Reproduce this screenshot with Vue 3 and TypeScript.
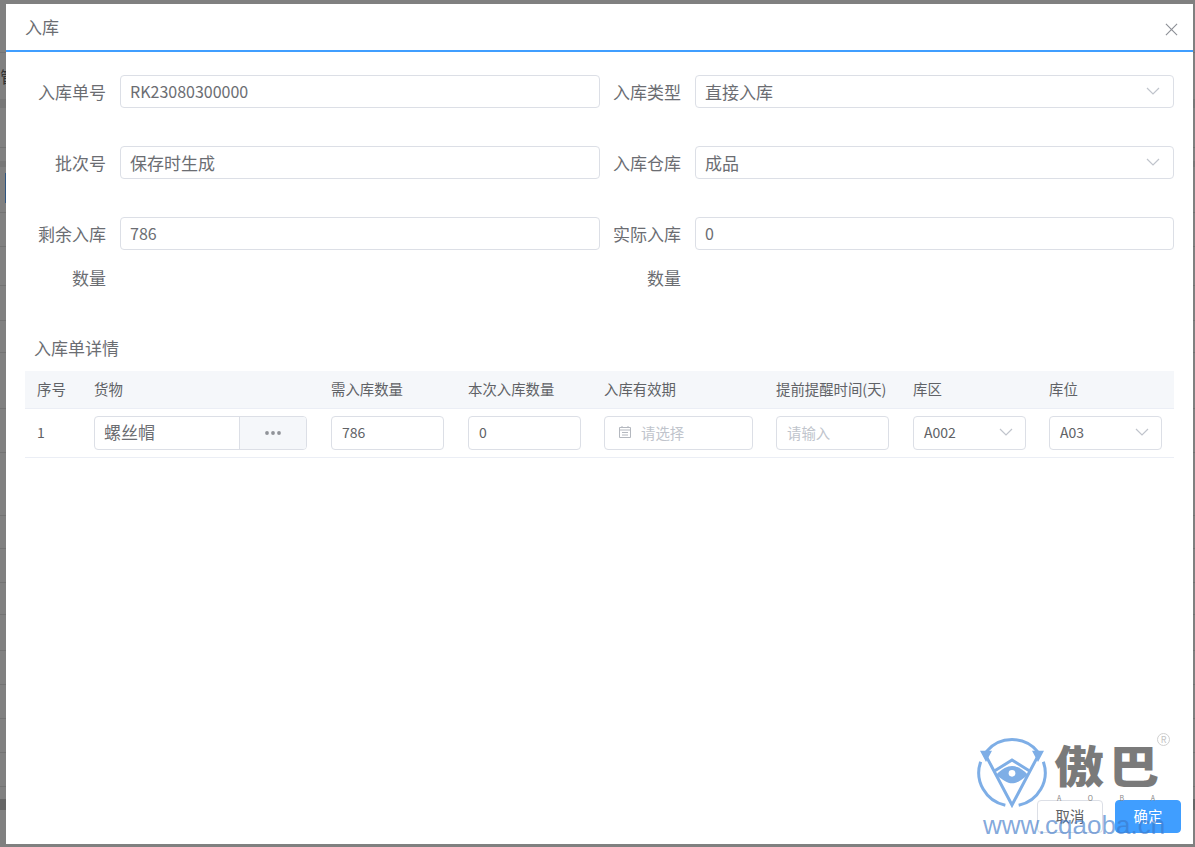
<template>
  <div class="page">
    <div class="backdrop">
      <div v-for="y in backdropLines" :key="y" class="backdrop-line" :style="{ top: y + 'px' }" />
      <div class="backdrop-band band-a" />
      <div class="backdrop-band band-b" />
      <div class="backdrop-band band-c" />
      <div class="backdrop-accent" />
      <span class="backdrop-char">管</span>
    </div>

    <div class="dialog">
      <header class="dialog-header">
        <span class="dialog-title">入库</span>
        <svg class="close-icon" viewBox="0 0 14 14" width="13" height="13">
          <path d="M1 1l12 12M13 1L1 13" stroke="#8c8f96" stroke-width="1.2" fill="none" />
        </svg>
      </header>

      <div class="dialog-body">
        <div class="form-grid">
          <div v-for="field in fields" :key="field.label" class="form-item">
            <label class="form-label">{{ field.label }}</label>
            <div class="form-input">
              <span :class="{ latin: field.latin }">{{ field.value }}</span>
              <svg v-if="field.select" class="chevron" viewBox="0 0 14 8" width="14" height="8">
                <path d="M1 1l6 6 6-6" stroke="#c0c4cc" stroke-width="1.2" fill="none" />
              </svg>
            </div>
          </div>
        </div>

        <div class="section-title">入库单详情</div>

        <div class="table">
          <div class="table-row table-head">
            <div v-for="col in columns" :key="col" class="cell">{{ col }}</div>
          </div>
          <div class="table-row table-data">
            <div class="cell">1</div>
            <div class="cell">
              <div class="goods">
                <span class="goods-name">螺丝帽</span>
                <span class="goods-more">
                  <svg viewBox="0 0 16 4" width="16" height="4">
                    <circle cx="2" cy="2" r="1.900" fill="#909399" />
                    <circle cx="8" cy="2" r="1.900" fill="#909399" />
                    <circle cx="14" cy="2" r="1.900" fill="#909399" />
                  </svg>
                </span>
              </div>
            </div>
            <div class="cell"><div class="mini-input">786</div></div>
            <div class="cell"><div class="mini-input">0</div></div>
            <div class="cell">
              <div class="mini-input date placeholder">
                <svg viewBox="0 0 14 14" width="14" height="14">
                  <path d="M1.500 2.500h11v10h-11zM1.500 5h11M4 1v2M10 1v2M4 7.500h6M4 10h6" stroke="#b4b8bf" stroke-width="1" fill="none" />
                </svg>
                <span>请选择</span>
              </div>
            </div>
            <div class="cell"><div class="mini-input placeholder">请输入</div></div>
            <div class="cell">
              <div class="mini-input select">
                <span>A002</span>
                <svg viewBox="0 0 14 8" width="14" height="8">
                  <path d="M1 1l6 6 6-6" stroke="#c0c4cc" stroke-width="1.2" fill="none" />
                </svg>
              </div>
            </div>
            <div class="cell">
              <div class="mini-input select">
                <span>A03</span>
                <svg viewBox="0 0 14 8" width="14" height="8">
                  <path d="M1 1l6 6 6-6" stroke="#c0c4cc" stroke-width="1.2" fill="none" />
                </svg>
              </div>
            </div>
          </div>
        </div>
      </div>

      <footer class="dialog-footer">
        <button class="btn" type="button">取消</button>
        <button class="btn primary" type="button">确定</button>
      </footer>
    </div>

    <!-- site watermark sits on top of the dialog -->
    <div class="watermark">
      <svg class="wm-logo" viewBox="0 0 240 255" width="80" height="85">
        <g fill="none" stroke="#7eaee6" stroke-width="9">
          <path d="M43 65A100 100 0 0 1 197 65" />
          <path d="M26 95A100 100 0 0 0 100 226" />
          <path d="M214 95A100 100 0 0 1 140 226" />
          <path d="M38 70L120 225L202 70" />
          <path d="M66 124L120 90L174 124" />
        </g>
        <path d="M24 62h36L42 96zM216 62h-36l18 34z" fill="#7eaee6" />
        <path d="M72 134C92 116 105 108 120 108s28 8 48 26c-20 16-34 26-48 26s-28-10-48-26z" fill="#7eaee6" />
        <circle cx="120" cy="130" r="10" fill="#fff" />
      </svg>
      <span class="wm-name">傲巴</span>
      <span class="wm-reg">R</span>
      <div class="wm-letters"><span>A</span><span>O</span><span>B</span><span>A</span></div>
      <span class="wm-url">www.cqaoba.cn</span>
    </div>
  </div>
</template>

<script setup lang="ts">
interface Field {
  label: string;
  value: string;
  select?: boolean;
  latin?: boolean;
}

const backdropLines: number[] = [52, 99, 147, 212, 246, 285, 320, 352, 408, 452, 515, 548, 582, 614, 650, 684, 718, 752, 786];

const fields: Field[] = [
  { label: '入库单号', value: 'RK23080300000', latin: true },
  { label: '入库类型', value: '直接入库', select: true },
  { label: '批次号', value: '保存时生成' },
  { label: '入库仓库', value: '成品', select: true },
  { label: '剩余入库数量', value: '786', latin: true },
  { label: '实际入库数量', value: '0', latin: true },
];

const columns: string[] = ['序号', '货物', '需入库数量', '本次入库数量', '入库有效期', '提前提醒时间(天)', '库区', '库位'];
</script>

<style>
html,
body {
  margin: 0;
  background: #808080;
}
</style>

<style scoped>
.page {
  position: relative;
  width: 1195px;
  height: 847px;
  overflow: hidden;
  background: #808080;
  font-family: 'Noto Sans CJK SC', 'Noto Sans', sans-serif;
  color: #606266;
}

.backdrop-line {
  position: absolute;
  left: 0;
  right: 0;
  height: 1px;
  background: #737373;
}

.backdrop-band {
  position: absolute;
  left: 0;
  right: 0;
  background: #777;
}

.band-a {
  top: 99px;
  height: 9px;
}

.band-b {
  top: 161px;
  height: 6px;
}

.band-c {
  top: 799px;
  height: 11px;
  background: #666;
}

.backdrop-accent {
  position: absolute;
  left: 5px;
  top: 173px;
  width: 1px;
  height: 30px;
  background: #2f5580;
}

.backdrop-char {
  position: absolute;
  left: 0;
  top: 64px;
  font-size: 16px;
  color: #333;
}

.dialog {
  position: absolute;
  left: 6px;
  top: 4px;
  width: 1187px;
  height: 840px;
  background: #fff;
  display: flex;
  flex-direction: column;
}

.dialog-header {
  height: 48px;
  box-sizing: border-box;
  border-bottom: 2px solid #409eff;
  padding: 0 15px 0 19px;
  display: flex;
  align-items: center;
  justify-content: space-between;
  flex-shrink: 0;
}

.dialog-title {
  font-size: 17px;
  color: #6b6d72;
  margin-top: -1px;
}

.close-icon {
  margin-top: 5px;
}

.dialog-body {
  flex: 1;
  padding: 23px 19px 0;
}

.form-grid {
  display: grid;
  grid-template-columns: 575px 574px;
  row-gap: 38px;
  align-items: start;
}

.form-item {
  display: flex;
  align-items: flex-start;
  min-height: 33px;
}

.form-label {
  width: 81px;
  margin: -5px 14px -6px 0;
  flex-shrink: 0;
  font-size: 17px;
  line-height: 44px;
  text-align: right;
  color: #6b6d72;
}

.form-input {
  flex: 1;
  height: 33px;
  box-sizing: border-box;
  border: 1px solid #dcdfe6;
  border-radius: 4px;
  padding: 0 9px 1px;
  display: flex;
  align-items: center;
  justify-content: space-between;
  font-size: 17px;
  color: #6b6d72;
}

.latin {
  font-size: 16px;
}

.chevron {
  margin-right: 4px;
}

.section-title {
  margin-top: 42px;
  padding-left: 9px;
  font-size: 17px;
  line-height: 24px;
  color: #6b6d72;
}

.table {
  margin-top: 11px;
}

.table-row {
  display: grid;
  grid-template-columns: 57px 237px 137px 136px 172px 137px 136px 137px;
}

.table-head {
  height: 38px;
  background: #f5f7fa;
  border-bottom: 1px solid #ebeef5;
  box-sizing: border-box;
  font-size: 14.4px;
  color: #606266;
}

.table-head .cell {
  padding-bottom: 2px;
}

.table-data {
  height: 49px;
  border-bottom: 1px solid #ebeef5;
  box-sizing: border-box;
  font-size: 14px;
}

.table-data .cell:first-child {
  padding-bottom: 2px;
}

.cell {
  padding: 0 12px;
  display: flex;
  align-items: center;
  white-space: nowrap;
}

/* these three inputs run a pixel wider than their column */
.table-data .cell:nth-child(4) .mini-input,
.table-data .cell:nth-child(5) .mini-input,
.table-data .cell:nth-child(7) .mini-input {
  margin-right: -1px;
}

.goods {
  flex: 1;
  height: 34px;
  box-sizing: border-box;
  border: 1px solid #dcdfe6;
  border-radius: 4px;
  display: flex;
  overflow: hidden;
}

.goods-name {
  flex: 1;
  padding-left: 9px;
  line-height: 30px;
  font-size: 17px;
  color: #6b6d72;
}

.goods-more {
  width: 67px;
  box-sizing: border-box;
  background: #f5f7fa;
  border-left: 1px solid #dcdfe6;
  display: flex;
  align-items: center;
  justify-content: center;
}

.mini-input {
  flex: 1;
  height: 34px;
  box-sizing: border-box;
  border: 1px solid #dcdfe6;
  border-radius: 4px;
  padding: 0 10px 2px;
  display: flex;
  align-items: center;
  font-size: 14px;
  color: #606266;
}

.placeholder {
  color: #c0c4cc;
  font-size: 14.4px;
}

.date {
  padding-left: 13px;
  gap: 9px;
}

.select {
  justify-content: space-between;
  padding-right: 12px;
}

.dialog-footer {
  height: 44px;
  box-sizing: border-box;
  padding-left: 1031px;
  display: flex;
  gap: 12px;
  flex-shrink: 0;
}

.btn {
  width: 66px;
  height: 33px;
  padding: 0 0 2px;
  box-sizing: border-box;
  border: 1px solid #dcdfe6;
  border-radius: 4px;
  background: #fff;
  font-family: inherit;
  font-size: 14.4px;
  color: #606266;
}

.btn.primary {
  background: #409eff;
  border-color: #409eff;
  color: #fff;
}

.watermark {
  position: absolute;
  left: 972px;
  top: 730px;
  width: 223px;
  height: 110px;
  pointer-events: none;
}

.wm-logo {
  position: absolute;
  left: 0;
  top: 0;
}

.wm-name {
  position: absolute;
  left: 82px;
  top: 9px;
  font-size: 50px;
  line-height: 50px;
  font-weight: 900;
  color: #7a7a7a;
  letter-spacing: 5px;
  white-space: nowrap;
  transform: scaleY(0.88);
}

.wm-reg {
  position: absolute;
  left: 185px;
  top: 3px;
  width: 11px;
  height: 11px;
  border: 1px solid #d0d0d0;
  border-radius: 50%;
  font-size: 9px;
  line-height: 11px;
  text-align: center;
  color: #c4c4c4;
}

.wm-letters {
  position: absolute;
  left: 85px;
  top: 65px;
  width: 98px;
  display: flex;
  justify-content: space-between;
  font-size: 7px;
  line-height: 7px;
  color: #888;
}

.wm-url {
  position: absolute;
  left: 11px;
  top: 80px;
  font-family: 'Liberation Sans', sans-serif;
  font-size: 26px;
  line-height: 30px;
  white-space: nowrap;
  color: rgba(60, 120, 200, 0.65);
}
</style>
